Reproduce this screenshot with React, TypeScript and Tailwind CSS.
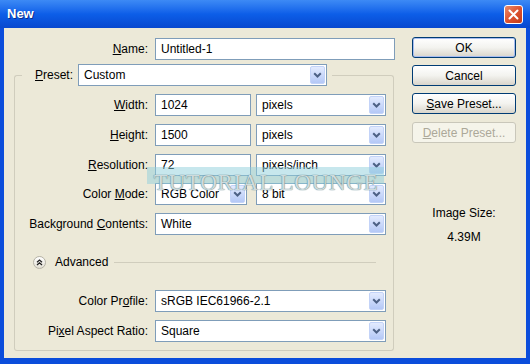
import type { ReactNode } from "react"

const Chevron = () => (
  <svg width="9" height="6" viewBox="0 0 9 6">
    <path d="M1.2 1.2 L4.5 4.5 L7.8 1.2" fill="none" stroke="#4d6185" strokeWidth="2" />
  </svg>
)

const Combo = ({ value, className }: { value: string; className: string }) => (
  <div className={`flex h-[22px] items-stretch border border-[#7f9db9] bg-white p-px ${className}`}>
    <span className="flex-1 truncate pl-[4px] leading-[18px]">{value}</span>
    <span className="flex w-[15px] items-center justify-center rounded-[2px] border border-[#c3d3f8] bg-gradient-to-b from-[#e3ebfe] to-[#b4c8f6]">
      <Chevron />
    </span>
  </div>
)

const Field = ({ value, className }: { value: string; className: string }) => (
  <div className={`h-[22px] border border-[#7f9db9] bg-white pl-[5px] leading-[20px] ${className}`}>{value}</div>
)

const Row = ({ label, children, className = "" }: { label: ReactNode; children: ReactNode; className?: string }) => (
  <div className={`flex h-[22px] items-center ${className}`}>
    <span className="w-[133px] text-right">{label}</span>
    <div className="ml-[7px] flex gap-[5px]">{children}</div>
  </div>
)

const Button = ({ children, primary, disabled, className = "" }: { children: ReactNode; primary?: boolean; disabled?: boolean; className?: string }) => (
  <div
    className={`flex h-[21px] w-[104px] items-center justify-center rounded-[3px] border ${
      disabled
        ? "border-[#c9c7ba] bg-[#f5f4ea] text-[#aca899]"
        : primary
        ? "border-[#003c74] bg-gradient-to-b from-white via-[#f3f3ef] to-[#d9d5cb] shadow-[inset_0_0_0_1px_#a8bdf0]"
        : "border-[#003c74] bg-gradient-to-b from-white via-[#f3f3ef] to-[#d9d5cb]"
    } ${className}`}
  >
    {children}
  </div>
)

export default function App() {
  return (
    <div className="relative flex h-[364px] w-[530px] flex-col bg-[#0b4ddb] font-['Liberation_Sans',Arial,sans-serif] text-[12px] text-black">
      {/* Title bar */}
      <div className="flex h-[28px] items-center justify-between bg-gradient-to-b from-[#3d8af5] via-[#0d5ee8] to-[#0848cf] pl-[7px] pr-[7px]">
        <span className="text-[13px] font-bold text-white [text-shadow:1px_1px_0_#0a2e8c]">New</span>
        <div className="flex h-[19px] w-[19px] items-center justify-center rounded-[3px] border border-white bg-gradient-to-br from-[#e88a6a] via-[#dd5330] to-[#c23a16]">
          <svg width="11" height="11" viewBox="0 0 11 11">
            <path d="M1.5 1.5 L9.5 9.5 M9.5 1.5 L1.5 9.5" stroke="white" strokeWidth="2" strokeLinecap="round" />
          </svg>
        </div>
      </div>

      {/* Body */}
      <div className="mx-[4px] mb-[6px] flex flex-1 bg-[#ece9d8]">
        <div className="flex w-[398px] flex-col">
          <div className="mt-[10px] flex h-[22px] items-center">
            <span className="w-[144px] text-right">
              <u>N</u>ame:
            </span>
            <Field value="Untitled-1" className="ml-[7px] w-[240px]" />
          </div>

          {/* Group box */}
          <div className="ml-[10px] mt-[4px] flex w-[380px] flex-col">
            <div className="flex h-[22px] items-center">
              <div className="h-[11px] w-[8px] self-end rounded-tl-[3px] border-l border-t border-[#d0cdbd]" />
              <span className="ml-[13px]">
                <u>P</u>reset:
              </span>
              <Combo value="Custom" className="ml-[5px] w-[249px]" />
              <div className="ml-[5px] h-[11px] flex-1 self-end rounded-tr-[3px] border-r border-t border-[#d0cdbd]" />
            </div>
            <div className="flex flex-col rounded-b-[3px] border-x border-b border-[#d0cdbd] pb-[8px]">
              <Row label={<><u>W</u>idth:</>} className="mt-[8px]">
                <Field value="1024" className="w-[96px]" />
                <Combo value="pixels" className="w-[130px]" />
              </Row>
              <Row label={<><u>H</u>eight:</>} className="mt-[8px]">
                <Field value="1500" className="w-[96px]" />
                <Combo value="pixels" className="w-[130px]" />
              </Row>
              <Row label={<><u>R</u>esolution:</>} className="mt-[8px]">
                <Field value="72" className="w-[96px]" />
                <Combo value="pixels/inch" className="w-[130px]" />
              </Row>
              <Row label={<>Color <u>M</u>ode:</>} className="mt-[7px]">
                <Combo value="RGB Color" className="w-[92px]" />
                <Combo value="8 bit" className="ml-[4px] w-[130px]" />
              </Row>
              <Row label={<>Background <u>C</u>ontents:</>} className="mt-[8px]">
                <Combo value="White" className="w-[231px]" />
              </Row>

              <div className="mt-[20px] flex h-[14px] items-center">
                <div className="ml-[18px] flex h-[13px] w-[13px] items-center justify-center rounded-full border border-[#b5b2a6] bg-gradient-to-b from-white to-[#e2dfd3]">
                  <svg width="7" height="7" viewBox="0 0 7 7">
                    <path d="M1 3.2 L3.5 1 L6 3.2 M1 6 L3.5 3.8 L6 6" fill="none" stroke="#222" strokeWidth="1.3" />
                  </svg>
                </div>
                <span className="ml-[9px]">Advanced</span>
                <div className="ml-[6px] mr-[17px] h-px flex-1 bg-[#d0cdbd]" />
              </div>

              <Row label={<>Color Pr<u>o</u>file:</>} className="mt-[21px]">
                <Combo value="sRGB IEC61966-2.1" className="w-[231px]" />
              </Row>
              <Row label={<>Pi<u>x</u>el Aspect Ratio:</>} className="mt-[8px]">
                <Combo value="Square" className="w-[231px]" />
              </Row>
            </div>
          </div>
        </div>

        {/* Buttons */}
        <div className="ml-[10px] flex w-[104px] flex-col items-center">
          <Button primary className="mt-[9px]">OK</Button>
          <Button className="mt-[7px]">Cancel</Button>
          <Button className="mt-[7px]">
            <span>
              <u>S</u>ave Preset...
            </span>
          </Button>
          <Button disabled className="mt-[8px]">
            <span>
              <u>D</u>elete Preset...
            </span>
          </Button>
          <span className="mt-[63px] leading-[14px]">Image Size:</span>
          <span className="mt-[10px] leading-[14px]">4.39M</span>
        </div>
      </div>

      {/* Watermark */}
      <div className="absolute left-[147px] top-[167px] h-[17px] w-[237px] bg-[#8fcfdc]/50" />
      <div className="absolute left-[150px] top-[172px] w-[232px] text-center font-['Liberation_Serif',serif] text-[23px] leading-[22px] tracking-[0.7px] text-[#e4ecec]/85 [text-shadow:0_0_1px_#5f828c,0_0_1px_#5f828c]">
        TUTORIAL LOUNGE
      </div>
    </div>
  )
}
